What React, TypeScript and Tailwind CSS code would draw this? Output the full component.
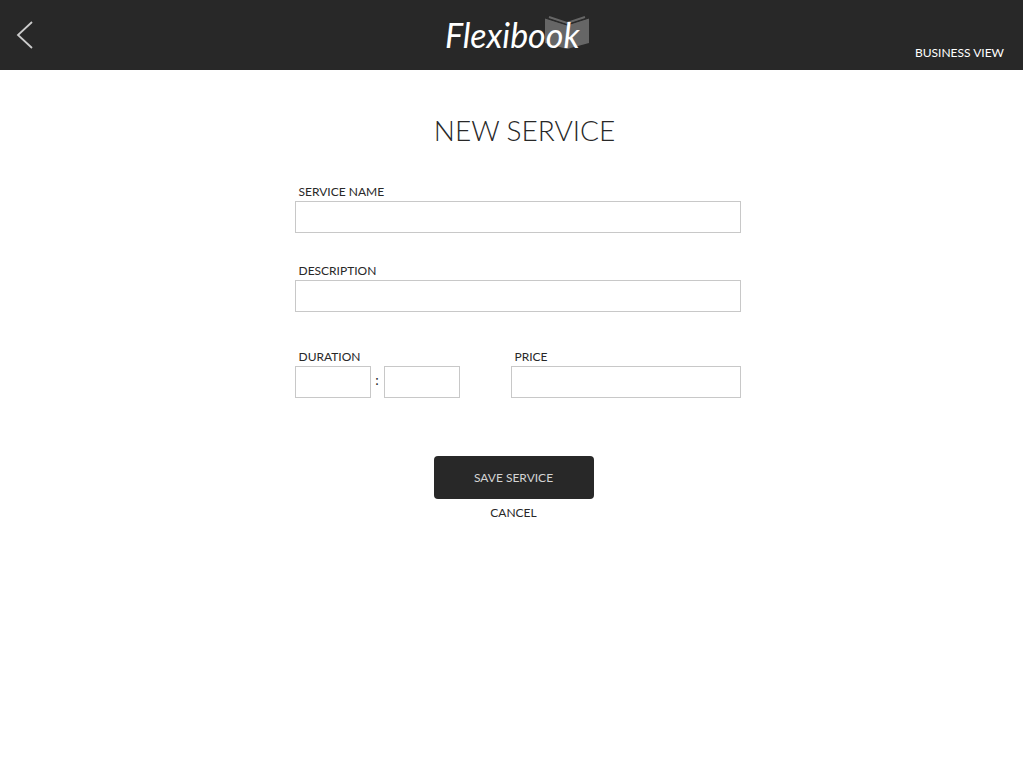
import type { InputHTMLAttributes } from "react";

const boxStyle =
  "block h-8 w-full border border-[#c8c8c8] bg-white px-2 text-sm text-[#282828] outline-none focus:border-[#808080]";

function Field({
  id,
  label,
  className = "",
  ...input
}: { id: string; label: string } & InputHTMLAttributes<HTMLInputElement>) {
  return (
    <div className={className}>
      <label htmlFor={id} className="block w-fit pl-1 text-xs leading-[18px]">
        {label}
      </label>
      <input id={id} className={boxStyle} {...input} />
    </div>
  );
}

function Logo() {
  return (
    <svg viewBox="0 0 150 50" className="h-[50px] w-[150px]" role="img" aria-label="Flexibook">
      <path d="M102 10 L124 17 L146 10 V35 L124 41 L102 35 Z" fill="#666666" />
      <path d="M106 9 L124 15 L142 9" fill="none" stroke="#666666" strokeWidth="2" />
      <path d="M102 10 L124 17 L146 10" fill="none" stroke="#282828" strokeWidth="1" />
      <text
        x="2"
        y="40"
        fill="#ffffff"
        className="font-['Lato','Liberation_Sans',sans-serif] text-[34px] italic"
      >
        Flexibook
      </text>
    </svg>
  );
}

export default function App() {
  return (
    <div className="min-h-screen bg-white font-['Lato','Liberation_Sans',sans-serif] text-[#282828]">
      <header className="grid h-[70px] grid-cols-[1fr_auto_1fr] bg-[#282828] text-white">
        <button type="button" aria-label="Back" className="ml-4 self-center justify-self-start">
          <svg viewBox="0 0 18 28" className="h-7 w-[18px]" fill="none" stroke="#cccccc" strokeWidth="1.8">
            <path d="M16 1 L2 14 L16 27" />
          </svg>
        </button>
        <div className="pt-2 pl-3">
          <Logo />
        </div>
        <a href="#business" className="mr-[19px] self-end justify-self-end pb-2 text-xs leading-[18px]">
          BUSINESS VIEW
        </a>
      </header>

      <main className="pl-3">
        <form className="mx-auto w-full max-w-[446px] pt-10" onSubmit={(e) => e.preventDefault()}>
          <h1 className="pl-[14px] text-center text-[28px] leading-10 font-light">NEW SERVICE</h1>

          <div className="flex flex-col pt-[33px]">
            <Field id="service-name" label="SERVICE NAME" />
            <Field id="description" label="DESCRIPTION" className="mt-[29px]" />

            <div className="mt-9 flex items-end justify-between">
              <fieldset>
                <legend className="pl-1 text-xs leading-[18px]">DURATION</legend>
                <div className="flex items-center">
                  <input aria-label="Duration hours" className={`${boxStyle} max-w-[76px]`} />
                  <span className="w-[13px] shrink-0 pb-1 text-center text-sm leading-none">:</span>
                  <input aria-label="Duration minutes" className={`${boxStyle} max-w-[76px]`} />
                </div>
              </fieldset>
              <Field id="price" label="PRICE" className="w-[230px]" />
            </div>
          </div>

          <div className="flex flex-col items-center pt-[58px] pr-2">
            <button type="submit" className="h-[43px] w-40 rounded bg-[#282828] text-xs text-[#d4d4d4]">
              SAVE SERVICE
            </button>
            <button type="button" className="pt-[5px] text-xs leading-[18px]">
              CANCEL
            </button>
          </div>
        </form>
      </main>
    </div>
  );
}
